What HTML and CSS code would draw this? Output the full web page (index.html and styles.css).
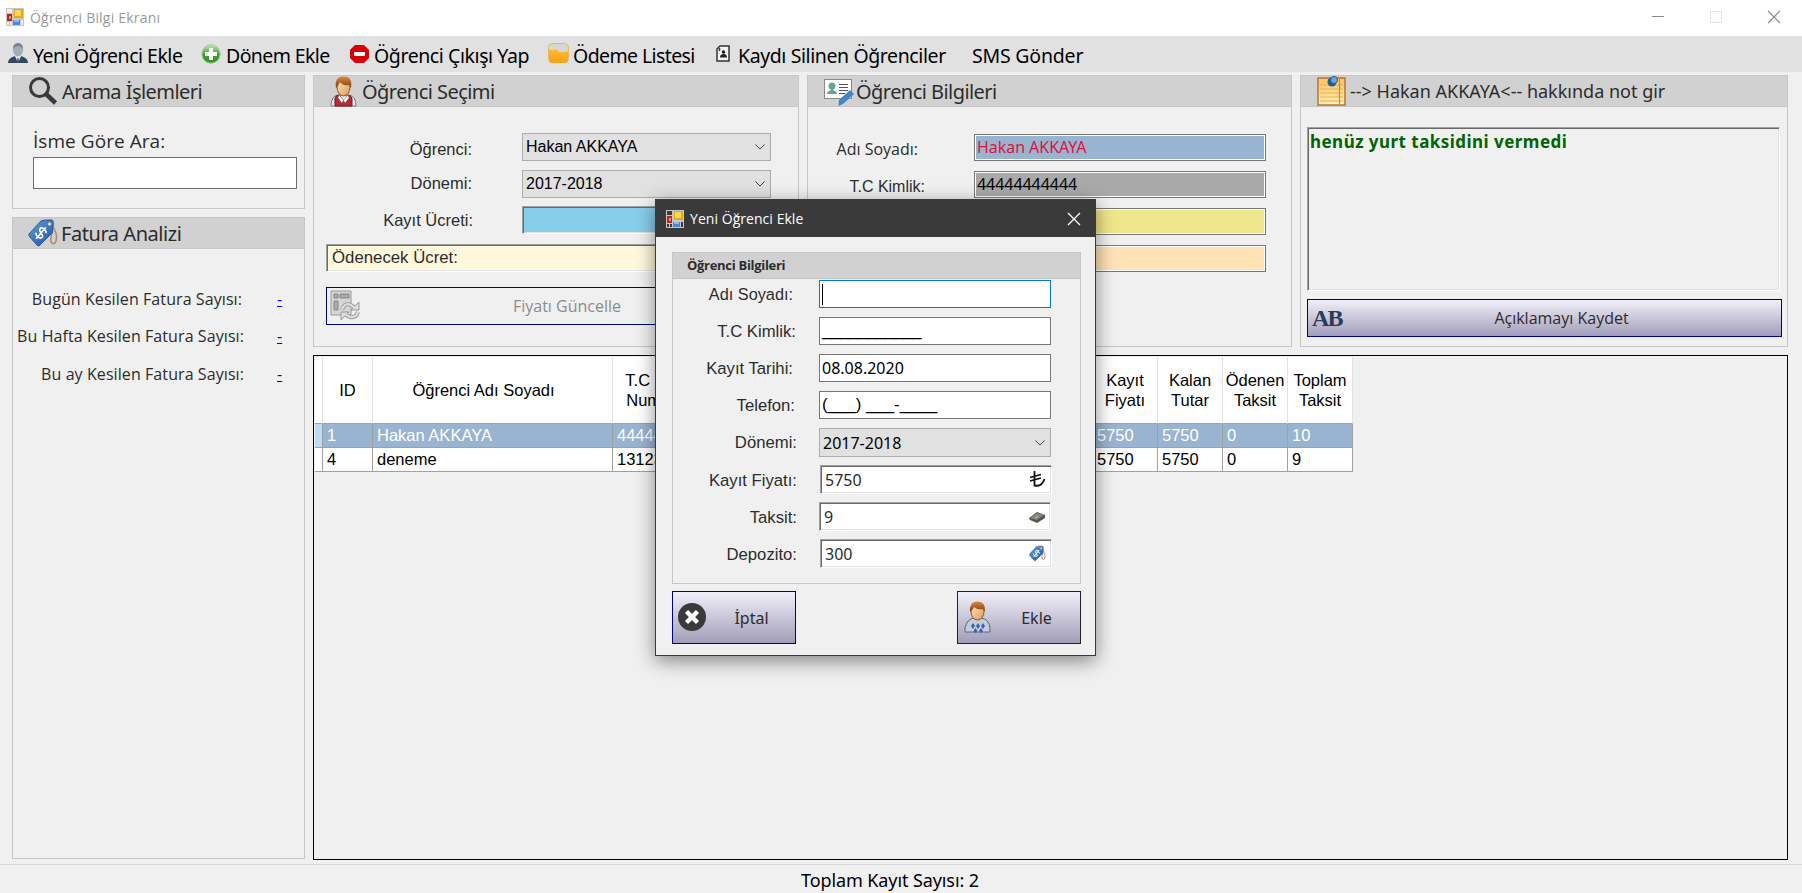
FILE: index.html
```html
<!DOCTYPE html>
<html lang="tr">
<head>
<meta charset="utf-8">
<title>Öğrenci Bilgi Ekranı</title>
<link rel="stylesheet" href="styles.css">
</head>
<body>
<svg class="defs" width="0" height="0">
  <defs>
    <linearGradient id="gBlue" x1="0" y1="0" x2="1" y2="1"><stop offset="0" stop-color="#5fa3e6"/><stop offset="1" stop-color="#1d4f9c"/></linearGradient>
    <linearGradient id="gNote" x1="0" y1="0" x2="0" y2="1"><stop offset="0" stop-color="#fbc25c"/><stop offset="1" stop-color="#fff0b8"/></linearGradient>
    <linearGradient id="gSkin" x1="0" y1="0" x2="1" y2="1"><stop offset="0" stop-color="#ffe6c4"/><stop offset="1" stop-color="#dc9c58"/></linearGradient>
    <linearGradient id="gHair" x1="0" y1="0" x2="0" y2="1"><stop offset="0" stop-color="#d98c3e"/><stop offset="1" stop-color="#7c3a10"/></linearGradient>
    <linearGradient id="gGreen" x1="0" y1="0" x2="0" y2="1"><stop offset="0" stop-color="#c4e6bc"/><stop offset="0.5" stop-color="#42a52e"/><stop offset="1" stop-color="#2b8f1c"/></linearGradient>
    <linearGradient id="gDb" x1="0" y1="0" x2="0" y2="1"><stop offset="0" stop-color="#fdb931"/><stop offset="1" stop-color="#f5a11c"/></linearGradient>
  </defs>
  <symbol id="form" viewBox="0 0 18 18">
    <rect width="18" height="18" fill="#c4c6ca"/><rect x="1" y="1" width="5" height="4" fill="var(--cell)"/><rect x="1" y="14" width="2" height="3" fill="var(--cell)"/><rect x="4" y="14" width="2" height="3" fill="var(--cell)"/><rect x="15" y="12" width="2" height="5" fill="var(--cell)"/>
    <rect x="1" y="6" width="5" height="7" fill="#b8281c"/><rect x="3" y="8" width="2" height="3" fill="#ef8b7f"/>
    <rect x="8" y="1" width="9" height="9" fill="#e8a80c"/><rect x="9" y="2" width="6" height="6" fill="#fcd75c"/>
    <rect x="7" y="12" width="7" height="5" fill="#4e86dd"/><rect x="8" y="12" width="5" height="2" fill="#8db7f2"/>
  </symbol>
  <symbol id="tag" viewBox="0 0 30 28">
    <path d="M24 7Q30 14 28 22Q26 27 23 23Q22 18 25 12" fill="none" stroke="#a98a78" stroke-width="1.6"/>
    <path d="M1 15L13 2Q15 1 18 1H24Q26 2 25 8L24 14L11 27Q9 27 8 25L1 17Z" fill="url(#gBlue)" stroke="#2b569a"/>
    <circle cx="21.500" cy="5" r="1.900" fill="#ddd" stroke="#777" stroke-width=".7"/>
    <g transform="rotate(40 13 14)"><path d="M17 11Q16 9 13 9Q9 9 9.500 11.500Q10 13.500 13 14Q17 14.500 16.500 17Q16 19 13 19Q10 19 9 17M13 6.500V21.500" fill="none" stroke="#fff" stroke-width="1.700"/></g>
  </symbol>
</svg>

<header class="titlebar">
  <svg class="form-icon"><use href="#form"/></svg>
  <span class="window-name">Öğrenci Bilgi Ekranı</span>
  <div class="window-controls">
    <svg width="14" height="14"><path d="M1 6.500H13" stroke="#888"/></svg>
    <svg width="14" height="14"><rect x="1.500" y="1.500" width="11" height="11" fill="none" stroke="#e4e4e4"/></svg>
    <svg width="14" height="14"><path d="M1 1L13 13M13 1L1 13" stroke="#888" stroke-width="1.100"/></svg>
  </div>
</header>

<nav class="menu">
  <span class="menu-item item-student">
    <svg width="20" height="21" viewBox="0 0 20 21"><path d="M0 20Q0 15 7 13L10 16L13 13Q20 15 20 20Z" fill="#33485e"/><path d="M7 13L10 20L13 13" fill="#eee"/><path d="M9.500 15H10.500L11 20H9Z" fill="#33485e"/><ellipse cx="10" cy="7" rx="5" ry="6.500" fill="#a2adb8"/><path d="M5 6Q5 0 10 0Q15 0 15 6Q13 3 10 3Q7 3 5 6" fill="#75828f"/></svg>
    <span>Yeni Öğrenci Ekle</span></span>
  <span class="menu-item item-term">
    <svg width="20" height="20" viewBox="0 0 20 20"><circle cx="10" cy="10" r="9.200" fill="url(#gGreen)" stroke="#a5c99e"/><path d="M8 4H12V8H16V12H12V16H8V12H4V8H8Z" fill="#fff"/></svg>
    <span>Dönem Ekle</span></span>
  <span class="menu-item item-exit">
    <svg width="19" height="18" viewBox="0 0 19 18"><path d="M5 0H14L19 5V13L14 18H5L0 13V5Z" fill="#d80008"/><rect x="4" y="7" width="11" height="4" rx="1" fill="#fff"/></svg>
    <span>Öğrenci Çıkışı Yap</span></span>
  <span class="menu-item item-pay">
    <svg width="21" height="21" viewBox="0 0 21 21"><rect x=".5" y=".5" width="20" height="19" rx="4" fill="#d8d6d0" stroke="#e8b95a"/><path d="M1 7H9L11 9H17L20 8V17Q20 20 17 20H4Q1 20 1 17Z" fill="url(#gDb)"/></svg>
    <span>Ödeme Listesi</span></span>
  <span class="menu-item item-deleted">
    <svg width="14" height="18" viewBox="0 0 14 18"><path d="M4 1H13V16H1V4Z" fill="#f4f4f4" stroke="#333" stroke-width="1.500"/><path d="M3.500 3V6" stroke="#333" stroke-width="1.500"/><circle cx="7.500" cy="7" r="1.800" fill="#222"/><path d="M4 12.500Q4 9 7.500 9Q11 9 11 12.500Z" fill="#222"/></svg>
    <span>Kaydı Silinen Öğrenciler</span></span>
  <span class="menu-item item-sms"><span>SMS Gönder</span></span>
</nav>

<main class="workspace">
  <aside class="sidebar">
    <section class="panel search">
      <h2 class="panel-head head-search">
        <svg width="29" height="29" viewBox="0 0 29 29"><circle cx="10.500" cy="10.500" r="9" fill="none" stroke="#3a3a3a" stroke-width="3"/><path d="M17 17L26.500 26" stroke="#3a3a3a" stroke-width="4.500"/></svg>
        <span>Arama İşlemleri</span></h2>
      <div class="search-body"><label>İsme Göre Ara:</label><div class="search-input"></div></div>
    </section>
    <section class="panel invoices">
      <h2 class="panel-head head-invoice"><svg width="30" height="28"><use href="#tag"/></svg><span>Fatura Analizi</span></h2>
      <div class="invoice-rows">
        <div class="invoice-row row-day"><span>Bugün Kesilen Fatura Sayısı:</span><a>-</a></div>
        <div class="invoice-row"><span>Bu Hafta Kesilen Fatura Sayısı:</span><a>-</a></div>
        <div class="invoice-row"><span>Bu ay Kesilen Fatura Sayısı:</span><a>-</a></div>
      </div>
    </section>
  </aside>

  <div class="content">
    <div class="top-panels">
      <section class="panel pick">
        <h2 class="panel-head head-pick">
          <svg width="27" height="31" viewBox="0 0 27 31"><path d="M1 30Q1 20 8 19H19Q26 20 26 30Z" fill="#ececec" stroke="#777"/><path d="M5 30V22Q6 19 9 19L14 25L18 19Q22 20 22 23V30Z" fill="#b42a30" stroke="#7d171c"/><path d="M9 19L13.500 24L18 19L19 22L15 27L13.500 24L12 27L8 22Z" fill="#fff" stroke="#777" stroke-width=".5"/><ellipse cx="13.500" cy="11" rx="6.500" ry="9" fill="url(#gSkin)" stroke="#91561f"/><path d="M6 12Q4 1 13 .5Q23 0 21 12L19 9Q13 10 10 6Q9 9 6 12Z" fill="url(#gHair)"/></svg>
          <span>Öğrenci Seçimi</span></h2>
        <div class="pick-body">
          <div class="field-row"><label class="sans label-student">Öğrenci:</label><div class="combo sans"><span>Hakan AKKAYA</span><svg width="10" height="6"><path d="M.5 .5L5 5L9.500 .5" fill="none" stroke="#444"/></svg></div></div>
          <div class="field-row"><label class="sans label-term">Dönemi:</label><div class="combo sans"><span>2017-2018</span><svg width="10" height="6"><path d="M.5 .5L5 5L9.500 .5" fill="none" stroke="#444"/></svg></div></div>
          <div class="field-row"><label class="sans label-fee">Kayıt Ücreti:</label><div class="sunken sky"></div></div>
          <div class="sunken due sans"><span>Ödenecek Ücret:</span></div>
          <div class="button refresh">
            <svg width="30" height="31" viewBox="0 0 30 31"><path d="M1 1H21V25H1Z" fill="#d6d6d6" stroke="#999"/><path d="M4 4H8V8H4ZM10 4H19V8H10ZM4 11H8V20H4Z" fill="#aaa" stroke="#888"/><path d="M12 20Q14 13 20 14.500L24 17M28 22Q26 28 20 27L16 25" fill="none" stroke="#999" stroke-width="4"/><path d="M29 12V20H21ZM11 30V22H19Z" fill="#ddd" stroke="#999"/><path d="M12 20Q14 13 20 14.500L25 18M28 22Q26 28 20 27L15 24" fill="none" stroke="#ddd" stroke-width="2.200"/></svg>
            <span>Fiyatı Güncelle</span></div>
        </div>
      </section>

      <section class="panel info">
        <h2 class="panel-head head-info">
          <svg width="31" height="27" viewBox="0 0 31 27"><rect x=".5" y=".5" width="27" height="19" fill="#fff" stroke="#888"/><circle cx="8" cy="7" r="3.500" fill="#66a491"/><path d="M3 15Q3 12 7 11V9H9V11Q13 12 13 15Z" fill="#66a491"/><path d="M15 5.500H24M15 8.500H24M15 11.500H24M15 14.500H21" stroke="#555" stroke-width="1.100"/><path d="M15 21L26 11L30 15L19 25L14.500 27Z" fill="#4583c4"/></svg>
          <span>Öğrenci Bilgileri</span></h2>
        <div class="info-body">
          <div class="info-row"><label class="label-name">Adı Soyadı:</label><div class="value blue"><span>Hakan AKKAYA</span></div></div>
          <div class="info-row"><label class="label-tc sans">T.C Kimlik:</label><div class="value gray"><span>44444444444</span></div></div>
          <div class="info-row"><div class="value khaki"></div></div>
          <div class="info-row"><div class="value peach"></div></div>
        </div>
      </section>

      <section class="panel note">
        <h2 class="panel-head head-note">
          <svg width="29" height="30" viewBox="0 0 29 30"><path d="M1 2H28V29H1Z" fill="url(#gNote)" stroke="#b87530" stroke-width="1.500"/><path d="M3 9H26M3 13H26M3 17H26M3 21H26M3 25H26" stroke="#e6aa56" stroke-width=".9"/><path d="M22.500 3V28" stroke="#d77b3a"/><circle cx="15" cy="6" r="4.500" fill="#275b91"/><circle cx="17" cy="4" r="3.500" fill="#6aa8d9" stroke="#275b91"/></svg>
          <span>--&gt; Hakan AKKAYA&lt;-- hakkında not gir</span></h2>
        <div class="note-body">
          <div class="sunken note-text"><span>henüz yurt taksidini vermedi</span></div>
          <div class="button save"><b class="ab">AB</b><span>Açıklamayı Kaydet</span></div>
        </div>
      </section>
    </div>

    <section class="grid-host">
      <table class="students sans">
        <colgroup><col class="c-sel"><col class="c-id"><col class="c-name"><col class="c-tc"><col class="c-gap"><col class="c-num"><col class="c-num"><col class="c-num"><col class="c-num"></colgroup>
        <thead><tr><th></th><th>ID</th><th class="th-name">Öğrenci Adı Soyadı</th><th class="th-tc">T.C Kimlik<br>Numarası</th><th></th><th>Kayıt<br>Fiyatı</th><th>Kalan<br>Tutar</th><th>Ödenen<br>Taksit</th><th>Toplam<br>Taksit</th></tr></thead>
        <tbody>
          <tr class="selected"><td></td><td>1</td><td>Hakan AKKAYA</td><td>44444444444</td><td></td><td>5750</td><td>5750</td><td>0</td><td>10</td></tr>
          <tr><td></td><td>4</td><td>deneme</td><td>13123</td><td></td><td>5750</td><td>5750</td><td>0</td><td>9</td></tr>
        </tbody>
      </table>
    </section>
  </div>
</main>

<footer class="status"><span>Toplam Kayıt Sayısı: 2</span></footer>

<div class="dialog">
  <div class="dialog-title"><svg class="form-icon"><use href="#form"/></svg><span>Yeni Öğrenci Ekle</span><svg class="close" width="14" height="14"><path d="M1 1L13 13M13 1L1 13" stroke="#fff" stroke-width="1.300"/></svg></div>
  <div class="dialog-body">
    <div class="group">
      <h3>Öğrenci Bilgileri</h3>
      <div class="form sans">
        <div class="form-row"><label class="f1">Adı Soyadı:</label><div class="input focus"><i class="caret"></i></div></div>
        <div class="form-row"><label class="f2">T.C Kimlik:</label><div class="input"><span class="mask">___________</span></div></div>
        <div class="form-row"><label class="f3">Kayıt Tarihi:</label><div class="input"><span class="digits">08.08.2020</span></div></div>
        <div class="form-row"><label class="f4">Telefon:</label><div class="input"><span class="phone">(___) ___-____</span></div></div>
        <div class="form-row"><label class="f5">Dönemi:</label><div class="combo"><span class="digits">2017-2018</span><svg width="10" height="6"><path d="M.5 .5L5 5L9.500 .5" fill="none" stroke="#444"/></svg></div></div>
        <div class="form-row"><label class="f6">Kayıt Fiyatı:</label><div class="sunken number"><span>5750</span><svg width="17" height="17" viewBox="0 0 17 17"><path d="M5.500 0V14.500Q13 16 15.500 8M1 6.500L12 3.500M1 10L12 7" fill="none" stroke="#111" stroke-width="1.800"/></svg></div></div>
        <div class="form-row"><label class="f7">Taksit:</label><div class="sunken number shifted"><span>9</span><svg width="16" height="17" viewBox="0 0 16 17"><path d="M0 10L8 4L16 7V10L8 15L1 12Z" fill="#555"/><path d="M1 10L8 5L15 7L8 12Z" fill="#858583"/><path d="M6 10L9 8" stroke="#b5b944" stroke-width="1.500"/></svg></div></div>
        <div class="form-row"><label class="f8">Depozito:</label><div class="sunken number"><span>300</span><svg width="17" height="17"><use href="#tag"/></svg></div></div>
      </div>
    </div>
    <div class="actions">
      <div class="button cancel"><svg width="28" height="28" viewBox="0 0 28 28"><circle cx="14" cy="14" r="14" fill="#3a3a3a"/><path d="M8.500 8.500L19.500 19.500M19.500 8.500L8.500 19.500" stroke="#fff" stroke-width="4.500"/></svg><span>İptal</span></div>
      <div class="button add"><svg width="27" height="32" viewBox="0 0 27 32"><path d="M1 31V27Q3 18 10 17H17Q25 18 26 27V31Z" fill="#c3ced9" stroke="#5e6872"/><path d="M9 22l2 3-2 3-2-3zM14 22l2 3-2 3-2-3zM19 22l2 3-2 3-2-3zM11.500 27l2 3-2 2-2-2zM17 27l2 3-2 2-2-2z" fill="#3c60b7"/><ellipse cx="13.500" cy="10.500" rx="6.500" ry="8.500" fill="url(#gSkin)" stroke="#91561f"/><path d="M6 11Q5 1 13 .5Q22 0 21 11L19 8Q13 9 10 6Q9 9 6 11Z" fill="url(#gHair)"/></svg><span>Ekle</span></div>
    </div>
  </div>
</div>
</body>
</html>
```

FILE: styles.css
```css
* { box-sizing: border-box; }
body { --cell: #eee; margin: 0; width: 1802px; height: 893px; overflow: hidden; display: flex; flex-direction: column; background: #f0f0f0; color: #2c2c2c; font: 16px "Open Sans", "Noto Sans", sans-serif; white-space: nowrap; position: relative; }
h2, h3 { margin: 0; font-weight: 400; }
svg { flex: none; display: block; }
.defs { position: absolute; }
.sans { font-family: "Liberation Sans", Arial, sans-serif; }
.form-icon { width: 18px; height: 18px; }

.titlebar { height: 36px; flex: none; background: #fff; display: flex; align-items: center; padding: 0 21px 2px 6px; gap: 6px; color: #999; font-size: 14px; }
.window-name { letter-spacing: .2px; }
.window-controls { margin-left: auto; display: flex; gap: 44px; }

.menu { height: 36px; flex: none; background: #e1e1e1; display: flex; align-items: center; color: #000; font: 19.500px "Noto Sans", sans-serif; letter-spacing: -.5px; padding-left: 8px; }
.menu-item { display: flex; align-items: center; gap: 6px; height: 36px; flex: none; }
.menu-item > svg { margin-bottom: 1px; }
.menu-item > span { padding-top: 2px; }
.item-student { width: 193px; gap: 5px; }
.item-term { width: 149px; gap: 5px; letter-spacing: -.6px; }
.item-exit { width: 198px; gap: 5px; letter-spacing: -.42px; }
.item-pay { width: 168px; gap: 4px; letter-spacing: -.6px; }
.item-deleted { width: 256px; gap: 8px; letter-spacing: -.4px; }
.item-sms { letter-spacing: -.2px; }

.workspace { height: 792px; flex: none; display: flex; gap: 8px; padding: 3px 14px 0 12px; }
.sidebar { width: 293px; display: flex; flex-direction: column; gap: 8px; }
.content { width: 1475px; display: flex; flex-direction: column; gap: 8px; }
.panel { border: 1px solid #c6c6c6; }
.panel-head { height: 31px; background: #d1d1d1; border-bottom: 1px solid #c6c6c6; display: flex; align-items: center; font: 20px "Noto Sans", sans-serif; letter-spacing: -.55px; }
.search { height: 134px; flex: none; }
.head-search { padding-left: 16px; gap: 4px; }
.search-body { padding: 19px 7px 0 20px; font-size: 19px; letter-spacing: .05px; }
.search-body label { display: block; line-height: 31px; }
.search-input { height: 32px; border: 1px solid #6e6e6e; background: #fff; }
.invoices { height: 642px; flex: none; }
.head-invoice { padding-left: 15px; gap: 3px; letter-spacing: -.45px; }
.invoice-rows { padding: 31px 20px 0 0; }
.invoice-row { height: 37.500px; display: flex; align-items: center; justify-content: flex-end; gap: 33px; font-size: 16px; letter-spacing: .08px; }
.row-day { gap: 35px; }
.invoice-row a { width: 7px; color: #00f; text-decoration: underline; }

.top-panels { display: flex; height: 272px; flex: none; }
.pick { width: 486px; margin-right: 8px; }
.info { width: 485px; margin-right: 8px; }
.note { width: 488px; }
.head-pick { padding-left: 16px; gap: 5px; }
.head-info { padding-left: 16px; gap: 1px; }
.head-info > svg { margin-top: 2px; }
.head-note { padding-left: 16px; gap: 4px; font-size: 18px; letter-spacing: 0; }
.pick-body { padding: 26px 27px 0 12px; }
.field-row { height: 37px; display: flex; align-items: flex-start; justify-content: flex-end; font-size: 16.500px; }
.field-row label { line-height: 34px; margin-top: -1px; }
.field-row .label-student { margin-right: 50px; }
.field-row .label-term { margin-right: 50px; margin-top: -4px; }
.field-row .label-fee { margin-right: 49px; margin-top: -4px; }
.combo { width: 249px; height: 28px; border: 1px solid #acacac; background: #e1e1e1; color: #000; display: flex; align-items: center; justify-content: space-between; padding: 0 5px 0 3px; }
.combo > span { margin-top: 1px; }
.pick .combo > span { margin-top: -1px; font-size: 16px; }
.sunken { border: 1px solid; border-color: #a0a0a0 #fff #fff #a0a0a0; box-shadow: inset 1px 1px #696969, inset -1px -1px #e3e3e3; background: #fff; }
.sky { width: 249px; height: 28px; margin-top: -1px; background: #87ceeb; }
.due { width: 446px; height: 28px; background: #fff8dc; padding: 3px 5px; line-height: 20px; font-size: 16.800px; }
.button { border: 1px solid #000080; background: linear-gradient(#f1f0f9, #a19db9); display: flex; align-items: center; justify-content: center; position: relative; }
.button > svg, .button > .ab { position: absolute; left: 4px; }
.refresh { width: 446px; height: 38px; margin-top: 15px; background: #f0f0f0; color: #8c8c8c; padding-left: 36px; }
.refresh > svg { top: 2px; left: 3px; }

.info-body { padding: 27px 25px 0 0; }
.info-row { height: 37px; display: flex; justify-content: flex-end; }
.info-row label { line-height: 30px; }
.label-name { margin-right: 56px; }
.label-tc { margin-right: 49px; padding-top: 1px; }
.value { width: 292px; height: 27px; border: 1px solid #777; box-shadow: inset 0 0 0 1px #fff; line-height: 25px; padding-left: 2px; font-family: "Noto Sans", sans-serif; letter-spacing: -.05px; }
.blue { background: #99b4d1; color: #dc143c; }
.gray { background: #a9a9a9; color: #000; }
.khaki { background: #f0e68c; }
.peach { background: #ffe2b5; }

.note-body { padding: 20px 6px 0; }
.note-text { width: 473px; height: 164px; background: #f0f0f0; color: #006400; font: bold 17px "Noto Sans", sans-serif; letter-spacing: .46px; padding: 2px; }
.save { width: 475px; height: 38px; margin-top: 8px; padding-left: 34px; }
.ab { font: bold 24px "Liberation Serif", serif; color: #2b3b58; letter-spacing: -1.800px; }

.grid-host { width: 1475px; height: 505px; flex: none; border: 1px solid #000; padding-left: 1px; padding-top: 1px; }
.students { width: 1038px; table-layout: fixed; border-collapse: separate; border-spacing: 0; color: #000; background: #fff; font-size: 16.500px; line-height: 20px; }
.c-sel { width: 8px; } .c-id { width: 50px; } .c-name { width: 240px; } .c-tc { width: 103px; } .c-gap { width: 377px; } .c-num { width: 65px; }
.students th { height: 67px; font-weight: 400; padding: 0; border-right: 1px solid #e2e2e2; border-bottom: 1px solid #a0a0a0; }
.students .th-name { padding-right: 18px; }
.students .th-tc { padding-right: 4px; }
.students td { height: 24px; padding: 0 4px 2px; border-right: 1px solid #a0a0a0; border-bottom: 1px solid #a0a0a0; }
.selected td { background: #99b4d1; color: #fff; }
.selected td:first-child { background: #bcdcf4; }

.status { flex: 1; border-top: 1px solid #d7d7d7; display: flex; justify-content: center; align-items: center; color: #000; font: 18px "Noto Sans", sans-serif; letter-spacing: -.1px; padding: 1px 22px 0 0; }

.dialog { position: absolute; left: 655px; top: 199px; width: 441px; height: 457px; border: 1px solid #3a3a3a; background: #f0f0f0; box-shadow: 0 5px 18px rgba(0,0,0,.45); }
.dialog-title { --cell: #3a3a3a; height: 37px; background: #3a3a3a; color: #fff; display: flex; align-items: center; gap: 6px; padding: 0 14px 0 10px; font-size: 14px; letter-spacing: .05px; }
.close { margin-left: auto; }
.dialog-body { padding: 15px 14px 0 16px; }
.group { height: 332px; border: 1px solid #c6c6c6; }
.group h3 { height: 26px; background: #d1d1d1; border-bottom: 1px solid #c6c6c6; padding-left: 14px; font: bold 13px/25px "Open Sans", sans-serif; letter-spacing: -.3px; }
.form { padding: 1px 29px 0 0; font-size: 17px; }
.form-row { height: 37px; display: flex; justify-content: flex-end; }
.form-row label { line-height: 29px; font-size: 16.700px; }
.f1 { margin-right: 26px; } .f2 { margin-right: 23px; } .f3 { margin-right: 26px; } .f4 { margin-right: 24px; } .f5 { margin-right: 22px; } .f6 { margin-right: 23px; margin-top: 1px; } .f7 { margin-right: 22px; margin-top: 1px; } .f8 { margin-right: 23px; margin-top: 1px; }
.form-row .f1 { font-size: 16.300px; }
.input { width: 232px; height: 28px; border: 1px solid #777; background: #fff; padding: 0 2px; display: flex; align-items: center; color: #000; }
.mask { letter-spacing: -.45px; }
.phone { letter-spacing: -.08px; }
.digits, .number span { font: 16px "Noto Sans", sans-serif; }
.focus { border-color: #0078d7; }
.caret { width: 1px; height: 21px; background: #000; }
.form .combo { width: 232px; height: 29px; }
.number { width: 232px; height: 29px; margin-right: -1px; display: flex; align-items: center; justify-content: space-between; padding: 0 5px 0 4px; }
.shifted { margin-right: 0; padding-right: 5px; padding-left: 4px; }
.actions { display: flex; justify-content: space-between; margin-top: 7px; }
.actions .button { width: 124px; height: 53px; padding-left: 35px; font: 16px "Noto Sans", sans-serif; }
.actions .button > svg { left: 5px; top: 11px; }
.actions .add { border-color: #222; }
.actions .add > svg { left: 6px; top: 9px; }
```
